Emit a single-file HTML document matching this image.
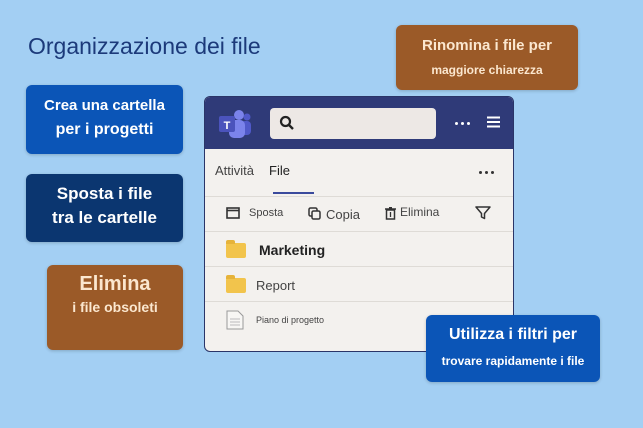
<!DOCTYPE html>
<html><head><meta charset="utf-8"><style>
*{margin:0;padding:0;box-sizing:border-box}
body{width:643px;height:428px;background:#a3cff3;font-family:"Liberation Sans",sans-serif;position:relative;overflow:hidden}
.a{position:absolute}
.box{position:absolute;border-radius:6px;color:#fff;text-align:center;font-weight:bold;box-shadow:0 1px 3px rgba(0,0,0,.2)}
.win{left:204px;top:96px;width:310px;height:256px;background:#f3f1ee;border:1.5px solid #2a3568;border-radius:6px;overflow:hidden}
.hd{height:52px;background:#2f3a78}
.row{position:absolute;left:0;right:0;border-top:1px solid #dedbd6}
.fold{position:absolute;width:20px;height:15px;background:#f2c44c;border-radius:2px}
.fold:before{content:"";position:absolute;left:0;top:-3px;width:9px;height:4px;background:#e6b33a;border-radius:2px 2px 0 0}
.dots{position:absolute;display:flex;gap:3px}
.dots i{width:3px;height:3px;border-radius:50%;display:block}
</style></head><body>
<div class="a" style="left:28px;top:33px;font-size:23px;color:#1c3a7a">Organizzazione dei file</div>

<div class="box" style="left:26px;top:85px;width:157px;height:69px;background:#0b55b7">
<div style="font-size:15px;margin-top:12px">Crea una cartella</div>
<div style="font-size:16px;margin-top:7px">per i progetti</div></div>

<div class="box" style="left:26px;top:174px;width:157px;height:68px;background:#0b3670">
<div style="font-size:17px;margin-top:10px">Sposta i file</div>
<div style="font-size:17px;margin-top:4px">tra le cartelle</div></div>

<div class="box" style="left:47px;top:265px;width:136px;height:85px;background:#9b5a28;color:#fbe7cf">
<div style="font-size:20px;margin-top:8px">Elimina</div>
<div style="font-size:14px;margin-top:3px">i file obsoleti</div></div>

<div class="box" style="left:396px;top:25px;width:182px;height:65px;background:#9b5a28;color:#fbe7cf">
<div style="font-size:15px;margin-top:12px">Rinomina i file per</div>
<div style="font-size:12px;margin-top:9px">maggiore chiarezza</div></div>

<div class="win a">
<div class="hd"></div>
<svg class="a" style="left:12px;top:12px" width="36" height="30" viewBox="0 0 36 30">
<circle cx="22" cy="6" r="5" fill="#7b83eb"/><circle cx="30" cy="8" r="3.5" fill="#5059c9"/>
<rect x="24" y="12" width="10" height="14" rx="4" fill="#5059c9"/>
<rect x="12" y="11" width="16" height="18" rx="5" fill="#7b83eb"/>
<rect x="2" y="7" width="16" height="16" rx="2" fill="#4b53bc"/>
<text x="10" y="20" font-size="11" font-weight="bold" fill="#fff" text-anchor="middle" font-family="Liberation Sans">T</text></svg>
<div class="a" style="left:65px;top:11px;width:166px;height:31px;background:#ede8e5;border-radius:4px"></div>
<svg class="a" style="left:74px;top:18px" width="16" height="16" viewBox="0 0 16 16"><circle cx="6.5" cy="6.5" r="4.5" fill="none" stroke="#222" stroke-width="2.2"/><path d="M10 10l4 4" stroke="#222" stroke-width="2.4"/></svg>
<div class="dots" style="left:250px;top:25px"><i style="background:#fff"></i><i style="background:#fff"></i><i style="background:#fff"></i></div>
<svg class="a" style="left:282px;top:19px" width="13" height="12"><path d="M0 1.5h13M0 6h13M0 10.5h13" stroke="#fff" stroke-width="2"/></svg>
<div class="a" style="left:10px;top:66px;font-size:13px;color:#444">Attività</div>
<div class="a" style="left:64px;top:66px;font-size:13px;color:#222">File</div>
<div class="dots" style="left:274px;top:74px"><i style="background:#333"></i><i style="background:#333"></i><i style="background:#333"></i></div>
<div class="a" style="left:68px;top:95px;width:41px;height:2px;background:#3a4a9c"></div>
<div class="row" style="top:99px"></div>
<svg class="a" style="left:21px;top:110px" width="14" height="12"><rect x="1" y="1" width="12" height="10" fill="none" stroke="#333" stroke-width="1.6"/><path d="M1 3.5h12" stroke="#333" stroke-width="1.6"/></svg>
<div class="a" style="left:44px;top:110px;font-size:11px;color:#444">Sposta</div>
<svg class="a" style="left:103px;top:110px" width="13" height="13"><rect x="1" y="1" width="8" height="8" rx="1.5" fill="none" stroke="#333" stroke-width="1.5"/><rect x="4" y="4" width="8" height="8" rx="1.5" fill="#f3f1ee" stroke="#333" stroke-width="1.5"/></svg>
<div class="a" style="left:121px;top:110px;font-size:13px;color:#444">Copia</div>
<svg class="a" style="left:180px;top:110px" width="11" height="13"><path d="M0 2h11M4 0.5h3" stroke="#333" stroke-width="1.4"/><rect x="1.5" y="3" width="8" height="9" fill="none" stroke="#333" stroke-width="1.5"/><path d="M5.5 5v5" stroke="#333" stroke-width="1.3"/></svg>
<div class="a" style="left:195px;top:108px;font-size:12px;color:#444">Elimina</div>
<svg class="a" style="left:270px;top:109px" width="16" height="14"><path d="M1 1h14l-5.5 6.5v5l-3-1.5v-3.5z" fill="none" stroke="#333" stroke-width="1.5" stroke-linejoin="round"/></svg>
<div class="row" style="top:134px"></div>
<div class="fold" style="left:21px;top:146px"></div>
<div class="a" style="left:54px;top:145px;font-size:14px;font-weight:bold;color:#222">Marketing</div>
<div class="row" style="top:169px"></div>
<div class="fold" style="left:21px;top:181px"></div>
<div class="a" style="left:51px;top:181px;font-size:13px;color:#444">Report</div>
<div class="row" style="top:204px"></div>
<svg class="a" style="left:21px;top:213px" width="18" height="20"><path d="M1 1h11l5 5v13H1z" fill="#f7f6f4" stroke="#999" stroke-width="1"/><path d="M4 9h10M4 12h10M4 15h10" stroke="#bbb"/></svg>
<div class="a" style="left:51px;top:218px;font-size:9px;color:#444">Piano di progetto</div>
</div>

<div class="box" style="left:426px;top:315px;width:174px;height:67px;background:#0b55b7">
<div style="font-size:16px;margin-top:11px">Utilizza i filtri per</div>
<div style="font-size:12px;margin-top:10px">trovare rapidamente i file</div></div>
</body></html>
